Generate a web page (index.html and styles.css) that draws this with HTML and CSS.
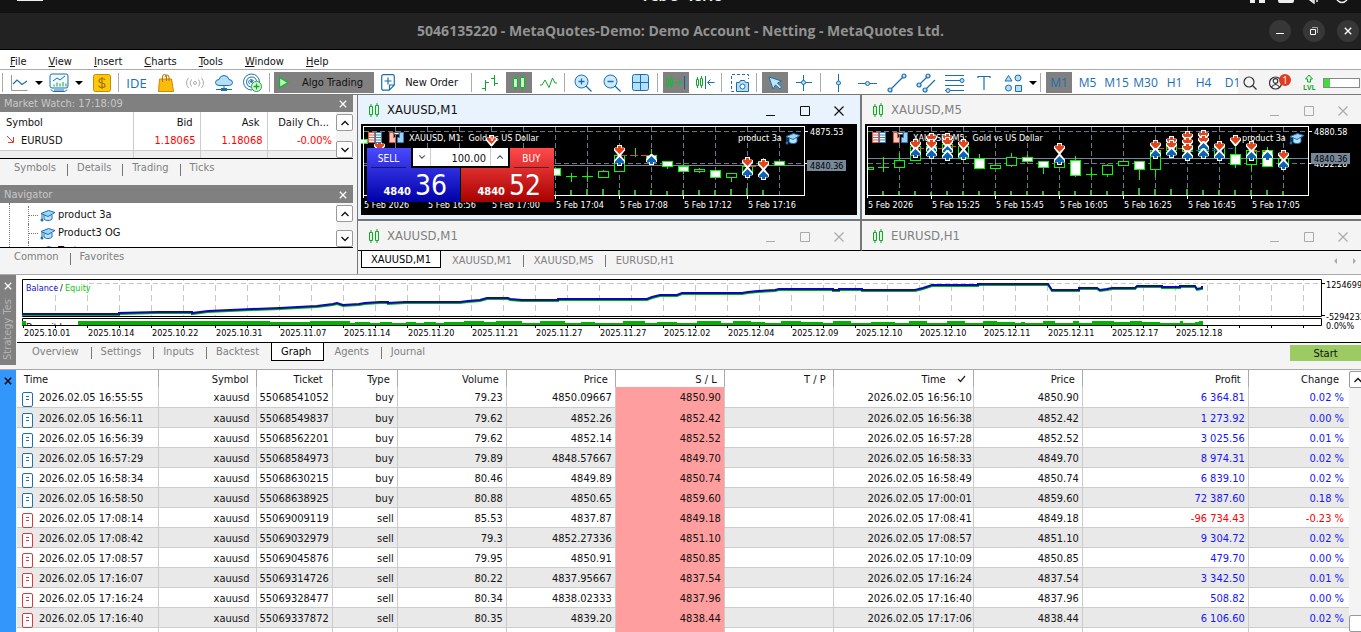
FILE: index.html
```html
<!DOCTYPE html>
<html lang="en">
<head>
    <meta charset="UTF-8">
    <meta name="viewport" content="width=device-width, initial-scale=1.0">
    <title>5046135220 - MetaQuotes-Demo: Demo Account - Netting - MetaQuotes Ltd.</title>
    <link rel="stylesheet" href="styles.css">
</head>
<body>
    <!-- shared icons -->
    <svg class="sprite" aria-hidden="true">
        <symbol id="i-close" viewBox="0 0 10 10"><path d="M1 1l8 8M9 1l-8 8" fill="none" stroke="currentColor" stroke-width="1.6"/></symbol>
        <symbol id="i-thin-close" viewBox="0 0 10 10"><path d="M.5.5l9 9M9.500.5l-9 9" fill="none" stroke="currentColor" stroke-width="1.2"/></symbol>
        <symbol id="i-max" viewBox="0 0 10 10"><path d="M.5.5h9v9h-9z" fill="none" stroke="currentColor"/></symbol>
        <symbol id="i-min" viewBox="0 0 10 10"><path d="M0 9.500h9" fill="none" stroke="currentColor"/></symbol>
        <symbol id="i-up" viewBox="0 0 10 10"><path d="M1.500 7L5 3.500 8.500 7" fill="none" stroke="currentColor" stroke-width="1.3"/></symbol>
        <symbol id="i-down" viewBox="0 0 10 10"><path d="M1.500 3L5 6.500 8.500 3" fill="none" stroke="currentColor" stroke-width="1.3"/></symbol>
        <symbol id="i-candles" viewBox="0 0 12 16"><path d="M1.500 4.500h3v8h-3zM7.500 3.500h3v9h-3z" fill="#d9fbd9" stroke="#15a52c"/><path d="M3 2v2M3 13v2M9 1v2M9 13v2" stroke="#15a52c"/></symbol>
        <symbol id="i-cap" viewBox="0 0 16 13"><path d="M4 6v4c2 2 6 2 8 0V6" fill="#bfe3fb" stroke="#1a6fb0"/><path d="M1 4.500L8.500 1.500 15 3.500 8 7.500z" fill="#9fd4f7" stroke="#1a6fb0"/><path d="M2 5v6" stroke="#1a6fb0"/><circle cx="2" cy="11" r="1.500" fill="#1a6fb0"/></symbol>
        <symbol id="i-doc" viewBox="0 0 11 15"><rect x=".5" y=".5" width="10" height="14" rx="1.500" fill="#fff" stroke="currentColor"/><path d="M4 4.500h3M4 7.500h3" stroke="currentColor"/></symbol>
        <g id="m-sell"><path d="M3 0h5v2.500h2l1 1v2L6.500 11h-2L0 5.500v-2l1-1h2z" fill="#fff"/><path d="M4 1h3v2h3v1.500L5.500 9 1 4.500V3h3z" fill="#e2441c"/></g>
        <g id="m-buy"><path d="M3 11h5V8.500h2l1-1v-2L6.500 0h-2L0 5.500v2l1 1h2z" fill="#fff"/><path d="M4 10h3V8h3V6.500L5.500 2 1 6.500V8h3z" fill="#0c62b4"/></g>
        <symbol id="c-marks" viewBox="0 0 38 13"><path d="M1.500 1.500h6v10h-6z" fill="#fff" stroke="#e05545"/><path d="M8.500 1.500h6v10h-6z" fill="#fff" stroke="#2c7fc4"/><path d="M2 4h5M2 6.500h5M2 9h5" stroke="#e05545"/><path d="M8 4h6M8 6.500h6M8 9h6" stroke="#2c7fc4"/><path d="M22.500 1.500h4v5h2v5h-6z" fill="#f8c5bd" stroke="#e05545"/><path d="M36.500 1.500h-4v5h-2v5h6z" fill="#9fd0f5" stroke="#2c7fc4"/><path d="M27 1.500h5v2h-5z" fill="#fff" stroke="#555"/></symbol>
        <symbol id="c-grid" viewBox="0 0 444 80">
            <path d="M3 7.500h440M3 39.500h440M34.500 3v68M66.500 3v68M98.500 3v68M130.500 3v68M162.500 3v68M194.500 3v68M226.500 3v68M258.500 3v68M290.500 3v68M322.500 3v68M354.500 3v68M386.500 3v68M418.500 3v68" fill="none" stroke="#67798b" stroke-dasharray="5 3"/>
        </symbol>
    </svg>

    <div class="desktop-bar">
        <span class="pill"></span>
        <time class="clock">Feb 5  18:18</time>
        <svg class="tray" width="104" height="4" viewBox="0 0 104 4" fill="#eee"><path d="M4 0h5v3H4zM13 0h6v3h-6zM32 0h16v1q0 2-2 2H34q-2 0-2-2z"/><path d="M64 0l4 3V0zM71 0v2M91 0q5 5 10 0" fill="none" stroke="#eee" stroke-width="1.500"/></svg>
    </div>
    <header class="title-bar">
        <h1>5046135220 - MetaQuotes-Demo: Demo Account - Netting - MetaQuotes Ltd.</h1>
        <div class="title-buttons">
            <button aria-label="Minimize"><svg width="10" height="10"><path d="M1 7.500h8" stroke="#fff"/></svg></button>
            <button aria-label="Restore"><svg width="10" height="10" fill="none" stroke="#fff"><path d="M1.500 3.500h5v5h-5z"/><path d="M3 1.500h5.500V7" stroke="#aaa"/></svg></button>
            <button aria-label="Close"><svg width="8" height="8"><use href="#i-close"/></svg></button>
        </div>
    </header>

    <nav class="menu-bar">
        <a href="#"><u>F</u>ile</a>
        <a href="#"><u>V</u>iew</a>
        <a href="#"><u>I</u>nsert</a>
        <a href="#"><u>C</u>harts</a>
        <a href="#"><u>T</u>ools</a>
        <a href="#"><u>W</u>indow</a>
        <a href="#"><u>H</u>elp</a>
    </nav>

    <div class="toolbar">
        <div class="tools">
            <span class="sep first"></span>
            <button class="tool" aria-label="Chart"><svg width="20" height="20" fill="none"><path d="M2.500 2v15.500h16" stroke="#999"/><path d="M4 11l4-4 5 4.500L18 8" stroke="#1a6fb0" stroke-width="1.200"/></svg></button>
            <button class="caret" aria-label="More charts"></button>
            <button class="tool" aria-label="Profiles"><svg width="20" height="20" fill="none" stroke="#1a6fb0"><rect x="1" y="1" width="18" height="14" rx="2" fill="#f2faff"/><path d="M4 8l4-3 3 2 5-4M2 16.500q1 2 3 2h10q2 0 3-2M5 17h10"/><path d="M5 13.500v-2M8 13.500v-4M11 13.500v-3M14 13.500v-4.500M17 13.500v-3" stroke="#15a52c"/></svg></button>
            <button class="caret" aria-label="More profiles"></button>
            <button class="tool dollar" aria-label="Symbols"><svg width="18" height="18"><rect x=".5" y=".5" width="17" height="17" rx="2" fill="#fdc70c" stroke="#c98a00"/><path d="M12 6q-.5-1.500-3-1.500T6 6.500Q6 8.500 9 9t3 2.500-3 2-3.200-2M9 3v12" fill="none" stroke="#a87400" stroke-width="1.200"/></svg></button>
            <span class="sep"></span>
            <button class="tool ide">IDE</button>
            <button class="tool" aria-label="Market"><svg width="18" height="20"><path d="M2.500 6h12l2 12.500h-15z" fill="#fdbb0a" stroke="#c98a00"/><path d="M5.500 9V4q0-2.500 2-2.500T9.500 4v4M8 4q0-2 2-2t2 2v4" fill="none" stroke="#a87400"/></svg></button>
            <button class="tool" aria-label="Signals"><svg width="20" height="14" fill="none" stroke="#aaa"><circle cx="10" cy="7" r="1.500"/><path d="M6.500 3.500q-3 3.500 0 7M13.500 3.500q3 3.500 0 7M3.500 2q-4 5 0 10M16.500 2q4 5 0 10"/></svg></button>
            <button class="tool" aria-label="VPS"><svg width="20" height="18" stroke="#1a6fb0"><path d="M5 11.500Q1.500 11.500 1.500 8.500T5 5.500Q6 1.500 10 1.500t5 4q3.500.3 3.500 3t-3 3z" fill="#b5def8"/><path d="M10 12v3M2 15.500h16" fill="none"/><path d="M7 15.500h6" stroke-width="3"/></svg></button>
            <button class="tool" aria-label="Radar"><svg width="20" height="20" fill="none" stroke="#1a6fb0"><path d="M9 17A8 8 0 1 1 16.500 9M8 14A5 5 0 1 1 13.500 8M7 11.200A2.500 2.500 0 1 1 10.500 8"/><circle cx="8.500" cy="8.500" r="1" fill="#1a6fb0"/><circle cx="13.500" cy="13.500" r="5" fill="#dcfbdc" stroke="#15a52c"/><path d="M10.500 13.500h6M13.500 10.500v6" stroke="#15a52c" stroke-width="1.300"/></svg></button>
            <span class="sep"></span>
            <button class="algo"><svg width="12" height="13"><path d="M1.500 1.500L10 6.500l-8.500 5z" fill="#b9f5b9" stroke="#12b52e" stroke-width="1.300"/></svg>Algo Trading</button>
            <button class="new-order"><svg width="14" height="17" fill="none" stroke="#1a6fb0" stroke-width="1.200"><path d="M.7 2.500q0-1.800 1.800-1.800h9q1.800 0 1.800 1.800V11l-5 5.200H2.500Q.7 16.200.7 14.500zM13 11H8.500v5"/><path d="M3.500 7h7M7 3.500v7"/></svg>New Order</button>
            <span class="sep"></span>
            <button class="tool" aria-label="Bar chart"><svg width="18" height="18" fill="none" stroke="#15a52c"><path d="M4.500 6v11M1 14.500h3M5 8.500h3M13.500 1v11M10 4.500h3M14 9.500h3"/></svg></button>
            <button class="tool on" aria-label="Candlesticks"><svg width="14" height="18"><path d="M1.500 4.500h4v9h-4zM8.500 3.500h4v10h-4z" fill="#c6fac6" stroke="#12b52e"/><path d="M3.500 2v2M3.500 14v2M10.500 1v2M10.500 14v3" stroke="#12b52e"/></svg></button>
            <button class="tool" aria-label="Line chart"><svg width="18" height="14" fill="none" stroke="#15a52c"><path d="M1 9h2l3-5 4 7.500L13.500 2l2.500 5h2"/></svg></button>
            <span class="sep"></span>
            <button class="tool" aria-label="Zoom in"><svg width="18" height="18" stroke="#1a6fb0"><circle cx="7.500" cy="7.500" r="6.500" fill="#cdeafd"/><path d="M12 12l5.500 5.500M4.500 7.500h6M7.500 4.500v6" stroke-width="1.300"/></svg></button>
            <button class="tool" aria-label="Zoom out"><svg width="18" height="18" stroke="#1a6fb0"><circle cx="7.500" cy="7.500" r="6.500" fill="#cdeafd"/><path d="M12 12l5.500 5.500M4.500 7.500h6" stroke-width="1.300"/></svg></button>
            <button class="tool" aria-label="Tile windows"><svg width="18" height="18"><rect x=".5" y=".5" width="16" height="16" rx="2" fill="#b5e0fb" stroke="#1a6fb0"/><path d="M8.500 1v16M1 8.500h16" stroke="#1a6fb0"/></svg></button>
            <span class="sep"></span>
            <button class="tool on" aria-label="Auto scroll"><svg width="22" height="18" fill="none" stroke="#10c030"><path d="M1.500 5.500h2v6h-2zM5.500 4.500h2v7h-2zM2.500 3v2M2.500 12v2M6.500 2v2M6.500 12v2M10 8.500h6M13.500 5.500l3 3-3 3"/><path d="M19.500 2v13" stroke="#0c5ea0"/></svg></button>
            <button class="tool" aria-label="Chart shift"><svg width="20" height="18" fill="none" stroke="#15a52c"><path d="M1.500 5.500h2v6h-2zM5.500 4.500h2v7h-2zM2.500 3v2M2.500 12v2M6.500 2v2M6.500 12v2"/><path d="M10.500 2v13M13 8.500h6.500M15.500 5.500l-3 3 3 3" stroke="#1a6fb0"/></svg></button>
            <span class="sep"></span>
            <button class="tool" aria-label="Screenshot"><svg width="20" height="20" fill="none" stroke="#1a6fb0"><path d="M4 18.500H1.500v-17h17V6" stroke-dasharray="3 2"/><path d="M6.500 9.500h3l1-2h4l1 2h3v9h-12z" fill="#b5def8"/><circle cx="12.500" cy="13.500" r="2.500" fill="#fff"/></svg></button>
            <span class="sep"></span>
            <button class="tool on" aria-label="Cursor"><svg width="16" height="16"><path d="M2 2l4 12 2.500-4 4.500 4 1.500-2-4-4 4-2z" fill="#bfe5fd" stroke="#1a6fb0"/></svg></button>
            <button class="tool" aria-label="Crosshair"><svg width="18" height="18" fill="none" stroke="#1a6fb0"><path d="M8.500 1v16M1 8.500h16"/><circle cx="8.500" cy="8.500" r="2" fill="#b5def8"/></svg></button>
            <span class="sep"></span>
            <button class="tool" aria-label="Vertical line"><svg width="18" height="18" fill="none" stroke="#1a6fb0"><path d="M8.500 0v18"/><circle cx="8.500" cy="9" r="2" fill="#b5def8"/></svg></button>
            <button class="tool" aria-label="Horizontal line"><svg width="19" height="18" fill="none" stroke="#1a6fb0"><path d="M0 9.500h19"/><circle cx="9.500" cy="9.500" r="2" fill="#b5def8"/></svg></button>
            <button class="tool" aria-label="Trend line"><svg width="20" height="20" fill="none" stroke="#1a6fb0" stroke-width="1.200"><path d="M3 17L17 3"/><circle cx="3" cy="17" r="2" fill="#b5def8"/><circle cx="17" cy="3" r="2" fill="#b5def8"/></svg></button>
            <button class="tool" aria-label="Channel"><svg width="20" height="20" fill="none" stroke="#1a6fb0" stroke-width="1.200"><path d="M3 12l9-9M9 17L19 7"/><circle cx="3" cy="12" r="2" fill="#b5def8"/><circle cx="12" cy="3" r="2" fill="#b5def8"/><circle cx="9" cy="17" r="2" fill="#b5def8"/></svg></button>
            <button class="tool" aria-label="Fibonacci"><svg width="20" height="20" fill="none" stroke="#1a6fb0"><path d="M0 2.500h19M0 7.500h19M0 12.500h19M0 17.500h19"/><circle cx="17" cy="7.500" r="2" fill="#b5def8"/><circle cx="3" cy="17.500" r="2" fill="#b5def8"/></svg></button>
            <button class="tool" aria-label="Text"><svg width="14" height="16"><path d="M1 3V1.500h12V3M7 1.500V15" fill="none" stroke="#1a6fb0" stroke-width="1.200"/></svg></button>
            <button class="tool" aria-label="Objects"><svg width="18" height="18" fill="#b5def8" stroke="#1a6fb0"><path d="M4.500 1.500L8 7H1zM11.500 11.500h6v6h-6z"/><circle cx="14" cy="4" r="3"/><circle cx="4.500" cy="14" r="3"/></svg></button>
            <button class="caret" aria-label="More objects"></button>
            <span class="sep"></span>
            <button class="tool tf on">M1</button>
            <button class="tool tf">M5</button>
            <button class="tool tf">M15</button>
            <button class="tool tf">M30</button>
            <button class="tool tf">H1</button>
            <button class="tool tf">H4</button>
            <button class="tool tf">D1</button>
        </div>
        <div class="status-tools">
            <button aria-label="Search"><svg width="14" height="14" fill="none" stroke="#333" stroke-width="1.200"><circle cx="6" cy="6" r="5"/><path d="M9.500 9.500l4 4"/></svg></button>
            <button class="account" aria-label="Account"><svg width="14" height="14" fill="none" stroke="#333" stroke-width="1.200"><circle cx="6.500" cy="7" r="6"/><circle cx="6.500" cy="5" r="2.300"/><path d="M2.500 11q4-5 8 0"/></svg><span class="badge">1</span></button>
            <button class="lvl" aria-label="Level"><svg width="10" height="10"><path d="M5 1l3.500 4H6.500v3h-3V5H1.500z" fill="#dcfbdc" stroke="#15a52c"/></svg>LVL</button>
            <span class="gauge"><span></span></span>
        </div>
    </div>

    <main>
        <aside class="dock">
            <section class="watch">
                <h2 class="dock-title">Market Watch: 17:18:09 <button aria-label="Close Market Watch"><svg width="8" height="8"><use href="#i-close"/></svg></button></h2>
                <div class="dock-body">
                    <table>
                        <colgroup><col class="w-sym"><col class="w-num"><col class="w-num"><col></colgroup>
                        <thead><tr><th>Symbol</th><th>Bid</th><th>Ask</th><th>Daily Ch...</th></tr></thead>
                        <tbody>
                            <tr><td><svg width="9" height="9" fill="none" stroke="#d8402c"><path d="M1 1l6 6M7.500 2v5.500H2"/></svg>EURUSD</td><td>1.18065</td><td>1.18068</td><td>-0.00%</td></tr>
                            <tr><td></td><td></td><td></td><td></td></tr>
                        </tbody>
                    </table>
                    <div class="scroll">
                        <button aria-label="Scroll up"><svg width="10" height="10"><use href="#i-up"/></svg></button>
                        <button aria-label="Scroll down"><svg width="10" height="10"><use href="#i-down"/></svg></button>
                    </div>
                </div>
                <nav class="tabs"><a href="#">Symbols</a><a href="#">Details</a><a href="#">Trading</a><a href="#">Ticks</a></nav>
            </section>
            <section class="navigator">
                <h2 class="dock-title">Navigator <button aria-label="Close Navigator"><svg width="8" height="8"><use href="#i-close"/></svg></button></h2>
                <div class="dock-body">
                    <ul class="tree">
                        <li><svg width="16" height="13"><use href="#i-cap"/></svg>product 3a</li>
                        <li><svg width="16" height="13"><use href="#i-cap"/></svg>Product3 OG</li>
                        <li><svg width="16" height="13"><use href="#i-cap"/></svg>Test</li>
                    </ul>
                    <div class="scroll">
                        <button aria-label="Scroll up"><svg width="10" height="10"><use href="#i-up"/></svg></button>
                        <button aria-label="Scroll down"><svg width="10" height="10"><use href="#i-down"/></svg></button>
                    </div>
                </div>
                <nav class="tabs"><a href="#">Common</a><a href="#">Favorites</a></nav>
            </section>
        </aside>

        <section class="workspace">
            <div class="windows">
                <article class="window active">
                    <header>
                        <svg width="12" height="16"><use href="#i-candles"/></svg>
                        <h3>XAUUSD,M1</h3>
                        <button aria-label="Minimize"><svg width="10" height="10"><use href="#i-min"/></svg></button>
                        <button aria-label="Maximize"><svg width="10" height="10"><use href="#i-max"/></svg></button>
                        <button aria-label="Close"><svg width="10" height="10"><use href="#i-thin-close"/></svg></button>
                    </header>
                    <div class="chart">
                        <svg width="495" height="91" viewBox="0 0 495 91">
                            <use href="#c-grid" width="444" height="80"/>
                            <path d="M3 41.500h440" stroke="#778899"/>
                            <path d="M210.500 49v9M205 52.500h11M226.500 48v10M221 52.500h11M242.500 46v8M274.500 24v9M290.500 25v6M306.500 42v3M322.500 40v10M338.500 44v5M370.500 54v4M258.500 23v25M402.500 34v10" stroke="#0f0"/>
                            <path d="M237.500 47.500h10v6h-10zM253.500 31.500h10v16h-10zM333.500 45.500h10v2h-10zM365.500 49.500h10v4h-10zM381.500 42.500h10v7h-10z" stroke="#0f0"/>
                            <path class="down" d="M189.500 44.500h10v7h-10zM285.500 31.500h10v6h-10zM301.500 37.500h10v5h-10zM317.500 42.500h10v5h-10zM349.500 46.500h10v7h-10zM397.500 37.500h10v4h-10zM413.500 37.500h10v4h-10zM-1 15.500h7v4h-7z" stroke="#0f0"/>
                            <path d="M258 31.500h32M387 42.500h16" stroke="#e2441c" stroke-dasharray="8 3"/>
                            <path class="volume" d="M210 71v-5M226 71v-6M242 71v-6M258 71v-5M274 71v-5M290 71v-5M306 71v-4M322 71v-5M338 71v-5M354 71v-5M370 71v-6M386 71v-7M402 71v-5"/>
                            <g>
                                <use href="#m-sell" x="13" y="17"/><use href="#m-sell" x="125" y="11"/>
                                <use href="#m-sell" x="253" y="21"/><use href="#m-buy" x="253" y="31"/>
                                <use href="#m-buy" x="285" y="30"/>
                                <use href="#m-sell" x="381" y="33"/><use href="#m-buy" x="381" y="43"/>
                                <use href="#m-sell" x="397" y="35"/><use href="#m-buy" x="397" y="45"/>
                            </g>
                            <path class="frame" d="M2.500 74V2.500h441v69h-441M66.500 72v3M130.500 72v3M194.500 72v3M258.500 72v3M322.500 72v3M386.500 72v3M444 7.500h3M444 39.500h3"/>
                            <use href="#c-marks" x="6" y="7" width="38" height="13"/>
                            <g class="labels">
                                <text x="48" y="17" xml:space="preserve">XAUUSD, M1:  Gold vs US Dollar</text>
                                <text x="377" y="17">product 3a</text>
                                <text x="3" y="84">5 Feb 2026</text><text x="67" y="84">5 Feb 16:56</text><text x="131" y="84">5 Feb 17:00</text><text x="195" y="84">5 Feb 17:04</text><text x="259" y="84">5 Feb 17:08</text><text x="323" y="84">5 Feb 17:12</text><text x="387" y="84">5 Feb 17:16</text>
                                <text x="449" y="11">4875.53</text>
                            </g>
                            <use href="#i-cap" x="424" y="8" width="16" height="13"/>
                            <path d="M446 36h39v11h-39z" fill="#778899"/>
                            <text x="449" y="45" class="price">4840.36</text>
                        </svg>
                        <form class="one-click">
                            <button type="button" class="quote sell"><span class="side">SELL</span><span class="rate">4840 <b>36</b></span></button>
                            <button type="button" class="quote buy"><span class="side">BUY</span><span class="rate">4840 <b>52</b></span></button>
                            <div class="lots">
                                <button type="button" aria-label="Less"><svg width="8" height="8"><use href="#i-down"/></svg></button>
                                <input type="text" value="100.00" aria-label="Volume">
                                <button type="button" aria-label="More"><svg width="8" height="8"><use href="#i-up"/></svg></button>
                            </div>
                        </form>
                    </div>
                </article>
                <article class="window">
                    <header>
                        <svg width="12" height="16"><use href="#i-candles"/></svg>
                        <h3>XAUUSD,M5</h3>
                        <button aria-label="Minimize"><svg width="10" height="10"><use href="#i-min"/></svg></button>
                        <button aria-label="Maximize"><svg width="10" height="10"><use href="#i-max"/></svg></button>
                        <button aria-label="Close"><svg width="10" height="10"><use href="#i-thin-close"/></svg></button>
                    </header>
                    <div class="chart">
                        <svg width="495" height="91" viewBox="0 0 495 91">
                            <use href="#c-grid" width="444" height="80"/>
                            <path d="M3 34.500h440" stroke="#778899"/>
                            <g class="labels"><text x="48" y="17" xml:space="preserve">XAUUSD, M5:  Gold vs US Dollar</text></g>
                            <path d="M18.500 33v15M13 43.500h11M34.500 29v7M114.500 30v5M130.500 39v2M146.500 29v4M146.500 41v2M162.500 31v8M178.500 37v13M210.500 32v21M226.500 44v9M221 50.500h11M242.500 40v1M242.500 51v2M274.500 37v19M290.500 46v7M370.500 18v26M386.500 40v7M402.500 23v4" stroke="#0f0"/>
                            <path d="M3 43.500h5v2h-5zM29.500 36.500h10v7h-10zM45.500 22.500h10v14h-10zM61.500 22.500h10v5h-10zM77.500 20.500h10v8h-10zM93.500 22.500h10v12h-10zM125.500 41.500h10v3h-10zM141.500 33.500h10v8h-10zM189.500 36.500h10v7h-10zM237.500 41.500h10v9h-10zM253.500 37.500h10v4h-10zM285.500 26.500h10v19h-10zM301.500 21.500h10v5h-10zM317.500 21.500h10v6h-10zM333.500 24.500h10v3h-10zM349.500 23.500h10v7h-10zM381.500 26.500h10v14h-10zM413.500 34.500h10v8h-10z" stroke="#0f0"/>
                            <path class="down" d="M109.500 34.500h10v10h-10zM157.500 33.500h10v4h-10zM173.500 37.500h10v6h-10zM205.500 36.500h10v15h-10zM269.500 37.500h10v8h-10zM365.500 30.500h10v10h-10zM397.500 26.500h10v16h-10z" stroke="#0f0"/>
                            <path d="M51 24.500h32M83 22.500h16M291 24.500h32M387 27.500h16" stroke="#e2441c" stroke-dasharray="8 3"/>
                            <path d="M323 26.500h32M339 24.500h32" stroke="#0c62b4" stroke-dasharray="5 3"/>
                            <path class="volume" d="M18 71v-4M34 71v-4M50 71v-4M66 71v-3M82 71v-4M98 71v-4M114 71v-4M130 71v-4M146 71v-4M162 71v-4M178 71v-4M194 71v-4M210 71v-4M226 71v-5M242 71v-4M258 71v-4M274 71v-7M290 71v-6M306 71v-6M322 71v-6M338 71v-5M354 71v-5M370 71v-5M386 71v-5M402 71v-5M418 71v-4"/>
                            <g>
                                <use href="#m-sell" x="45" y="15"/><use href="#m-buy" x="45" y="23"/>
                                <use href="#m-sell" x="61" y="9"/><use href="#m-buy" x="61" y="19"/><use href="#m-sell" x="61" y="15"/><use href="#m-buy" x="61" y="24"/>
                                <use href="#m-sell" x="77" y="9"/><use href="#m-sell" x="77" y="13"/><use href="#m-buy" x="77" y="20"/><use href="#m-buy" x="77" y="26"/>
                                <use href="#m-sell" x="93" y="15"/><use href="#m-buy" x="93" y="25"/>
                                <use href="#m-sell" x="189" y="19"/><use href="#m-buy" x="189" y="30"/>
                                <use href="#m-sell" x="285" y="16"/><use href="#m-buy" x="285" y="24"/>
                                <use href="#m-sell" x="301" y="12"/><use href="#m-sell" x="301" y="16"/><use href="#m-buy" x="301" y="23"/>
                                <use href="#m-sell" x="317" y="7"/><use href="#m-sell" x="317" y="13"/><use href="#m-sell" x="317" y="19"/><use href="#m-buy" x="317" y="26"/>
                                <use href="#m-sell" x="333" y="6"/><use href="#m-sell" x="333" y="11"/><use href="#m-buy" x="333" y="17"/><use href="#m-buy" x="333" y="24"/>
                                <use href="#m-sell" x="349" y="17"/><use href="#m-buy" x="349" y="26"/>
                                <use href="#m-sell" x="365" y="11"/>
                                <use href="#m-sell" x="381" y="17"/><use href="#m-buy" x="381" y="26"/>
                                <use href="#m-buy" x="397" y="26"/>
                                <use href="#m-sell" x="413" y="26"/><use href="#m-buy" x="413" y="35"/>
                            </g>
                            <path class="frame" d="M2.500 74V2.500h441v69h-441M66.500 72v3M130.500 72v3M194.500 72v3M258.500 72v3M322.500 72v3M386.500 72v3M444 7.500h3M444 39.500h3"/>
                            <use href="#c-marks" x="6" y="7" width="38" height="13"/>
                            <g class="labels">
                                <text x="377" y="17">product 3a</text>
                                <text x="3" y="84">5 Feb 2026</text><text x="67" y="84">5 Feb 15:25</text><text x="131" y="84">5 Feb 15:45</text><text x="195" y="84">5 Feb 16:05</text><text x="259" y="84">5 Feb 16:25</text><text x="323" y="84">5 Feb 16:45</text><text x="387" y="84">5 Feb 17:05</text>
                                <text x="449" y="11">4880.58</text><text x="449" y="43">4852.28</text>
                            </g>
                            <use href="#i-cap" x="424" y="8" width="16" height="13"/>
                            <path d="M446 29h39v11h-39z" fill="#778899"/>
                            <text x="449" y="38" class="price">4840.36</text>
                        </svg>
                    </div>
                </article>
                <article class="window cut">
                    <header>
                        <svg width="12" height="16"><use href="#i-candles"/></svg>
                        <h3>XAUUSD,M1</h3>
                        <button aria-label="Minimize"><svg width="10" height="10"><use href="#i-min"/></svg></button>
                        <button aria-label="Maximize"><svg width="10" height="10"><use href="#i-max"/></svg></button>
                        <button aria-label="Close"><svg width="10" height="10"><use href="#i-thin-close"/></svg></button>
                    </header>
                </article>
                <article class="window cut">
                    <header>
                        <svg width="12" height="16"><use href="#i-candles"/></svg>
                        <h3>EURUSD,H1</h3>
                        <button aria-label="Minimize"><svg width="10" height="10"><use href="#i-min"/></svg></button>
                        <button aria-label="Maximize"><svg width="10" height="10"><use href="#i-max"/></svg></button>
                        <button aria-label="Close"><svg width="10" height="10"><use href="#i-thin-close"/></svg></button>
                    </header>
                </article>
            </div>
            <nav class="tabs chart-tabs">
                <a href="#" class="current">XAUUSD,M1</a><a href="#">XAUUSD,M1</a><a href="#">XAUUSD,M5</a><a href="#">EURUSD,H1</a>
                <svg class="arrows" width="24" height="8" fill="#aaa"><path d="M4 1v6L1 4zM20 1v6l3-3z"/></svg>
            </nav>
        </section>
    </main>

    <section class="tester">
        <div class="side-strip">
            <button aria-label="Close Strategy Tester"><svg width="8" height="8"><use href="#i-close"/></svg></button>
            <h2>Strategy Tester</h2>
        </div>
        <div class="tester-body">
            <div class="graph">
                <svg width="1344" height="66" viewBox="0 0 1344 66">
                    <defs>
                        <pattern id="months" x="6" width="32" height="46" patternUnits="userSpaceOnUse"><path d="M.5 0v46" stroke="#c8c8c8" stroke-dasharray="6 4"/></pattern>
                        <pattern id="ticks" x="6" y="50" width="32" height="3" patternUnits="userSpaceOnUse"><path d="M.5 0v3" stroke="#000"/></pattern>
                        <clipPath id="load"><path d="M6 44h52v6H6z"/></clipPath>
                        <path id="balance" d="M5 39H102V38L141 37H175V38L191 36 213 35 235 34 263 33 281 32 300 31 308 30 316 29 320 28 326 30 342 29 348 28 363 27H371V28L388 27H443L451 26 463 25 470 23H491L493 24 505 25H541V24H630L635 22 643 20H660L665 18H725L731 17 741 16 758 15 762 14H816V15H822V14H845V15H898L906 13 915 10H961V9H1031L1033 12 1035 15H1062V13H1080L1083 15 1090 14 1095 13H1118L1120 11H1145V12H1163V11H1178L1180 14 1185 13V11"/>
                    </defs>
                    <path d="M38 5h1266v36H38z" fill="url(#months)"/>
                    <path d="M72 8.500h1232" stroke="#c8c8c8" stroke-dasharray="5 3"/>
                    <path d="M5.500 4.500h1299v37H5.500zM5.500 43.500h1299v7H5.500zM1305 8.500h3M1305 40.500h3" fill="none" stroke="#000"/>
                    <g fill="none" stroke-width="2">
                        <use href="#balance" y="1" stroke="#00b400"/>
                        <use href="#balance" stroke="#0a0ab4"/>
                    </g>
                    <path d="M5 46h4v4H5zM61 46h192v1h40v-1h40v2h5v-1h15v1h10v-1h12v1h14v-1h10v1h8v-1h12v1h8v-1h20v-1h20v1h12v-1h26v2h18v-2h25v2h16v-1h14v1h28v-2h22v2h12v-1h20v1h20v-2h24v2h12v-2h18v1h14v1h16v-2h20v1h22v1h10v-2h18v2h20v-1h24v1h14v-2h18v2h20v-2h18v2h18v-2h14v1h18v1h6v-1h4v1h18v-2h12v2h18v-2h6v2h13v-2h22v1h16v-1h12v1h18v1h20v-2h3v2h12v-1h4v-1h4V50H61z" fill="#00b400"/>
                    <path d="M6 50h1298v3H6z" fill="url(#ticks)"/>
                    <text x="9" y="55" clip-path="url(#load)">Deposit Load</text>
                    <g><text x="9" y="16" fill="#1414c8">Balance</text><text x="43" y="16" fill="#000">/</text><text x="48" y="16" fill="#14c814">Equity</text></g>
                    <g>
                        <text x="7" y="61">2025.10.01</text><text x="71" y="61">2025.10.14</text><text x="135" y="61">2025.10.22</text><text x="199" y="61">2025.10.31</text><text x="263" y="61">2025.11.07</text><text x="327" y="61">2025.11.14</text><text x="391" y="61">2025.11.20</text><text x="455" y="61">2025.11.21</text><text x="519" y="61">2025.11.27</text><text x="583" y="61">2025.11.27</text><text x="647" y="61">2025.12.02</text><text x="711" y="61">2025.12.04</text><text x="775" y="61">2025.12.09</text><text x="839" y="61">2025.12.10</text><text x="903" y="61">2025.12.10</text><text x="967" y="61">2025.12.11</text><text x="1031" y="61">2025.12.11</text><text x="1095" y="61">2025.12.17</text><text x="1159" y="61">2025.12.18</text>
                        <text x="1309" y="13">12546995</text><text x="1309" y="45">-5294233</text><text x="1309" y="54">0.0%%</text>
                    </g>
                </svg>
            </div>
            <nav class="tabs tester-tabs">
                <a href="#">Overview</a><a href="#">Settings</a><a href="#">Inputs</a><a href="#">Backtest</a><a href="#" class="current">Graph</a><a href="#">Agents</a><a href="#">Journal</a>
                <button class="start">Start</button>
            </nav>
        </div>
    </section>

    <section class="toolbox">
        <div class="side-strip">
            <button aria-label="Close Toolbox"><svg width="8" height="8"><use href="#i-close"/></svg></button>
        </div>
        <table class="history">
            <colgroup><col class="w141"><col class="w98"><col class="w76"><col class="w65"><col class="w109"><col class="w109"><col class="w109"><col class="w109"><col class="w140"><col class="w109"><col class="w166"><col></colgroup>
            <thead>
                <tr><th>Time</th><th>Symbol</th><th>Ticket</th><th>Type</th><th>Volume</th><th>Price</th><th>S / L</th><th>T / P</th><th>Time <svg width="9" height="8"><path d="M1 4l2.500 2.500L8 1" fill="none" stroke="#222" stroke-width="1.200"/></svg></th><th>Price</th><th>Profit</th><th>Change</th></tr>
            </thead>
            <tbody>
                <tr><td><svg width="11" height="15"><use href="#i-doc"/></svg>2026.02.05 16:55:55</td><td>xauusd</td><td>55068541052</td><td>buy</td><td>79.23</td><td>4850.09667</td><td>4850.90</td><td></td><td>2026.02.05 16:56:10</td><td>4850.90</td><td>6 364.81</td><td>0.02 %</td></tr>
                <tr><td><svg width="11" height="15"><use href="#i-doc"/></svg>2026.02.05 16:56:11</td><td>xauusd</td><td>55068549837</td><td>buy</td><td>79.62</td><td>4852.26</td><td>4852.42</td><td></td><td>2026.02.05 16:56:38</td><td>4852.42</td><td>1 273.92</td><td>0.00 %</td></tr>
                <tr><td><svg width="11" height="15"><use href="#i-doc"/></svg>2026.02.05 16:56:39</td><td>xauusd</td><td>55068562201</td><td>buy</td><td>79.62</td><td>4852.14</td><td>4852.52</td><td></td><td>2026.02.05 16:57:28</td><td>4852.52</td><td>3 025.56</td><td>0.01 %</td></tr>
                <tr><td><svg width="11" height="15"><use href="#i-doc"/></svg>2026.02.05 16:57:29</td><td>xauusd</td><td>55068584973</td><td>buy</td><td>79.89</td><td>4848.57667</td><td>4849.70</td><td></td><td>2026.02.05 16:58:33</td><td>4849.70</td><td>8 974.31</td><td>0.02 %</td></tr>
                <tr><td><svg width="11" height="15"><use href="#i-doc"/></svg>2026.02.05 16:58:34</td><td>xauusd</td><td>55068630215</td><td>buy</td><td>80.46</td><td>4849.89</td><td>4850.74</td><td></td><td>2026.02.05 16:58:49</td><td>4850.74</td><td>6 839.10</td><td>0.02 %</td></tr>
                <tr><td><svg width="11" height="15"><use href="#i-doc"/></svg>2026.02.05 16:58:50</td><td>xauusd</td><td>55068638925</td><td>buy</td><td>80.88</td><td>4850.65</td><td>4859.60</td><td></td><td>2026.02.05 17:00:01</td><td>4859.60</td><td>72 387.60</td><td>0.18 %</td></tr>
                <tr class="short loss"><td><svg width="11" height="15"><use href="#i-doc"/></svg>2026.02.05 17:08:14</td><td>xauusd</td><td>55069009119</td><td>sell</td><td>85.53</td><td>4837.87</td><td>4849.18</td><td></td><td>2026.02.05 17:08:41</td><td>4849.18</td><td>-96 734.43</td><td>-0.23 %</td></tr>
                <tr class="short"><td><svg width="11" height="15"><use href="#i-doc"/></svg>2026.02.05 17:08:42</td><td>xauusd</td><td>55069032979</td><td>sell</td><td>79.3</td><td>4852.27336</td><td>4851.10</td><td></td><td>2026.02.05 17:08:57</td><td>4851.10</td><td>9 304.72</td><td>0.02 %</td></tr>
                <tr class="short"><td><svg width="11" height="15"><use href="#i-doc"/></svg>2026.02.05 17:08:57</td><td>xauusd</td><td>55069045876</td><td>sell</td><td>79.95</td><td>4850.91</td><td>4850.85</td><td></td><td>2026.02.05 17:10:09</td><td>4850.85</td><td>479.70</td><td>0.00 %</td></tr>
                <tr class="short"><td><svg width="11" height="15"><use href="#i-doc"/></svg>2026.02.05 17:16:07</td><td>xauusd</td><td>55069314726</td><td>sell</td><td>80.22</td><td>4837.95667</td><td>4837.54</td><td></td><td>2026.02.05 17:16:24</td><td>4837.54</td><td>3 342.50</td><td>0.01 %</td></tr>
                <tr class="short"><td><svg width="11" height="15"><use href="#i-doc"/></svg>2026.02.05 17:16:24</td><td>xauusd</td><td>55069328477</td><td>sell</td><td>80.34</td><td>4838.02333</td><td>4837.96</td><td></td><td>2026.02.05 17:16:40</td><td>4837.96</td><td>508.82</td><td>0.00 %</td></tr>
                <tr class="short"><td><svg width="11" height="15"><use href="#i-doc"/></svg>2026.02.05 17:16:40</td><td>xauusd</td><td>55069337872</td><td>sell</td><td>80.35</td><td>4839.20</td><td>4838.44</td><td></td><td>2026.02.05 17:17:06</td><td>4838.44</td><td>6 106.60</td><td>0.02 %</td></tr>
                <tr class="short"><td><svg width="11" height="15"><use href="#i-doc"/></svg></td><td></td><td></td><td></td><td></td><td></td><td></td><td></td><td></td><td></td><td></td><td></td></tr>
            </tbody>
        </table>
        <div class="scroll">
            <button aria-label="Scroll up"><svg width="10" height="10"><use href="#i-up"/></svg></button>
            <button aria-label="Scroll down"></button>
        </div>
    </section>
</body>
</html>
```
FILE: styles.css
```css
* {
    box-sizing: border-box;
}
body {
    display: flex;
    flex-direction: column;
    height: 100vh;
    margin: 0;
    overflow: hidden;
    background: #f4f4f4;
    color: #111;
    font: 11px/16px "DejaVu Sans Condensed", "DejaVu Sans", sans-serif;
}
button {
    display: flex;
    align-items: center;
    justify-content: center;
    flex: none;
    padding: 0;
    border: 0;
    background: none;
    color: inherit;
    font: inherit;
}
svg {
    flex: none;
}
a {
    color: inherit;
    text-decoration: none;
}
h1, h2, h3, ul {
    margin: 0;
    padding: 0;
    font-size: 11px;
    font-weight: normal;
}
table {
    border-collapse: collapse;
    table-layout: fixed;
}
.sprite {
    position: absolute;
    width: 0;
    height: 0;
}

/* desktop bar and title */
.desktop-bar {
    display: flex;
    justify-content: space-between;
    align-items: flex-start;
    height: 13px;
    background: #131313;
    overflow: hidden;
}
.pill {
    width: 26px;
    height: 1px;
    margin-left: 17px;
    background: #eee;
}
.clock {
    margin-top: -14px;
    margin-left: 76px;
    color: #f0f0f0;
    font: bold 14px/20px "Open Sans", sans-serif;
    white-space: pre;
}
.tray {
    margin-right: 11px;
}
.title-bar {
    display: grid;
    grid-template-columns: 1fr auto 1fr;
    align-items: center;
    height: 37px;
    border-bottom: 1px solid #000;
    background: #222;
    color: #929292;
}
.title-bar h1 {
    grid-column: 2;
    font: bold 14px/20px "Open Sans", sans-serif;
}
.title-buttons {
    display: flex;
    justify-content: flex-end;
    gap: 12px;
    padding-right: 2px;
}
.title-buttons button {
    width: 22px;
    height: 22px;
    border-radius: 50%;
    background: #373737;
    color: #fff;
}

/* menu and toolbar */
.menu-bar {
    display: flex;
    gap: 22px;
    height: 20px;
    padding: 4px 10px 0;
    border-bottom: 1px solid #aaa;
    background: #fff;
}
.toolbar {
    display: flex;
    height: 25px;
    border-bottom: 1px solid #777;
    background: #fff;
}
.tools {
    display: flex;
    align-items: center;
    flex: 1;
    min-width: 0;
    padding-top: 1px;
    overflow: hidden;
}
.sep {
    flex: none;
    width: 1px;
    height: 19px;
    margin: 0 3px 0 2px;
    background: #aaa;
}
.sep.first {
    margin-right: 1px;
}
.tool {
    width: 29px;
    height: 21px;
}
.tool.on {
    width: 26px;
    margin: 0 1px 0 2px;
    background: #808080;
}
.dollar {
    margin-left: 3px;
}
.ide, .tf {
    color: #1a6fb0;
    font: 12px/16px "Open Sans", sans-serif;
}
.ide {
    font-size: 13px;
}
.caret {
    width: 11px;
    height: 21px;
}
.caret::before {
    content: "";
    border: 4px solid transparent;
    border-top-color: #000;
    border-bottom: 0;
}
.algo {
    gap: 12px;
    height: 21px;
    margin: 0 7px 0 1px;
    padding: 0 11px 0 4px;
    background: #808080;
}
.new-order {
    gap: 10px;
    margin-right: 11px;
}
.status-tools {
    display: flex;
    align-items: center;
    flex: none;
    width: 123px;
    padding: 1px 0 0 5px;
    background: #f4f4f4;
}
.account {
    position: relative;
    margin-left: 12px;
    padding-right: 8px;
}
.badge {
    position: absolute;
    top: -2px;
    right: 0;
    width: 12px;
    height: 12px;
    border-radius: 50%;
    background: #e23a1e;
    color: #fff;
    font: 10px/12px "Open Sans", sans-serif;
}
.lvl {
    flex-direction: column;
    margin-left: 12px;
    color: #15a52c;
    font: bold 7px/7px "Open Sans", sans-serif;
}
.gauge {
    width: 37px;
    height: 10px;
    margin-left: 8px;
    border: 1px solid #888;
    background: #fff;
}
.gauge span {
    display: block;
    width: 6px;
    height: 8px;
    background: #3fdc3f;
}

/* docked panels */
main {
    display: flex;
    flex: none;
    border-bottom: 1px solid #aaa;
}
.dock {
    flex: none;
    width: 353px;
    margin-right: 4px;
}
.dock-title {
    display: flex;
    align-items: center;
    justify-content: space-between;
    height: 17px;
    padding: 1px 6px 0 4px;
    background: #808080;
    color: #c8c8c8;
}
.dock-title button {
    color: #fff;
}
.dock-body {
    display: flex;
    height: 47px;
    border-bottom: 1px solid #000;
    background: #fff;
    overflow: hidden;
}
.navigator .dock-title {
    height: 18px;
    padding-top: 2px;
}
.navigator .dock-body {
    height: 45px;
}
.scroll {
    display: flex;
    flex-direction: column;
    justify-content: space-between;
    flex: none;
    width: 17px;
    padding: 2px 0 0;
    background: #f4f4f4;
}
.scroll button {
    width: 17px;
    height: 17px;
    border: 1px solid #999;
    border-radius: 2px;
    background: #fff;
}
.watch table {
    flex: 1;
    height: 58px;
}
.w-sym {
    width: 133px;
}
.w-num {
    width: 67px;
}
.watch tr {
    height: 19px;
}
.watch th, .watch td {
    padding: 2px 4px 0;
    border-right: 1px solid #ccc;
    text-align: right;
    font-weight: normal;
}
.watch th {
    padding: 3px 7px 0;
}
.watch th:last-child, .watch td:last-child {
    border-right: 0;
}
.watch tr th:first-child, .watch tr td:first-child {
    padding-left: 6px;
    text-align: left;
    color: #111;
}
.watch td {
    border-bottom: 1px solid #ccc;
    color: #f00;
}
.watch td svg {
    margin-right: 6px;
}
.watch tbody tr:nth-child(2) {
    background: #eee;
}
.tree {
    flex: 1;
    margin-left: 9px;
    padding-top: 3px;
    border-left: 1px dotted #777;
    list-style: none;
}
.tree li {
    display: flex;
    align-items: center;
    gap: 2px;
    height: 18px;
    margin-left: 18px;
    border-left: 1px dotted #777;
}
.tree li::before {
    content: "";
    width: 9px;
    border-top: 1px dotted #777;
}
.tabs {
    display: flex;
    height: 26px;
    padding: 1px 4px 0;
    color: #808080;
}
.tabs a {
    height: 17px;
    padding: 0 11px 0 10px;
}
.tabs a + a {
    background: linear-gradient(#777, #777) 0 4px / 1px 12px no-repeat;
}

/* chart windows */
.workspace {
    flex: 1;
    min-width: 0;
    border-left: 1px solid #777;
    overflow: hidden;
}
.windows {
    display: grid;
    grid-template-columns: repeat(2, minmax(504px, 1fr));
}
.window {
    padding: 0 3px 4px;
    border-right: 2px solid #777;
    border-bottom: 2px solid #777;
    background: #f4f4f4;
}
.window.active {
    background: #e8f3fe;
}
.window header {
    display: flex;
    align-items: center;
    height: 29px;
    padding: 0 13px 0 7px;
    color: #aaa;
}
.window h3 {
    flex: 1;
    margin-left: 7px;
    color: #808080;
    font: 13px/20px "DejaVu Sans Condensed", sans-serif;
}
.window header button {
    padding-top: 2px;
}
.window header button + button {
    margin-left: 24px;
}
.window.active header, .window.active h3 {
    color: #111;
}
.window.cut {
    padding-bottom: 0;
    border-bottom: 1px solid #000;
}
.chart {
    position: relative;
    height: 91px;
    background: #000;
}
.chart svg {
    display: block;
    overflow: hidden;
}
.chart path {
    shape-rendering: crispEdges;
}
.chart .down {
    fill: #fff;
}
.chart .volume {
    stroke: #2fb52f;
    stroke-width: 2;
}
.chart .frame {
    fill: none;
    stroke: #fff;
}
.chart text, .graph text {
    font-size: 9px;
}
.labels {
    fill: #fff;
}
.one-click {
    position: absolute;
    top: 24px;
    left: 6px;
    display: flex;
    gap: 1px;
    height: 54px;
    background: #000;
}
.quote {
    display: block;
    width: 93px;
    height: 54px;
    color: #fff;
    text-align: left;
}
.sell {
    background: linear-gradient(#4a4aff, #0000a8);
    clip-path: polygon(0 0, 44px 0, 44px 20px, 100% 20px, 100% 100%, 0 100%);
}
.buy {
    background: linear-gradient(#ff4a4a, #a80000);
    clip-path: polygon(49px 0, 100% 0, 100% 100%, 0 100%, 0 20px, 49px 20px);
}
.side {
    display: block;
    width: 35px;
    height: 20px;
    margin-left: 4px;
    padding-top: 3px;
    border-bottom: 1px solid rgba(0, 0, 0, .5);
    font-size: 10px;
    text-align: center;
}
.buy .side {
    margin-left: 53px;
}
.rate {
    display: flex;
    align-items: baseline;
    justify-content: flex-end;
    gap: 4px;
    padding-right: 13px;
    font-size: 11px;
    font-weight: bold;
    line-height: 36px;
}
.rate b {
    font-size: 28px;
    font-weight: normal;
}
.lots {
    position: absolute;
    top: 0;
    left: 46px;
    display: flex;
    width: 95px;
    height: 18px;
    background: #fff;
    color: #555;
}
.lots button {
    width: 17px;
}
.lots input {
    flex: 1;
    min-width: 0;
    padding: 3px 4px 0;
    border: solid #ccc;
    border-width: 0 1px;
    background: #fff;
    color: #111;
    font: inherit;
    text-align: right;
}
.chart-tabs {
    height: 23px;
    padding: 0 4px 0 3px;
}
.chart-tabs a {
    height: 17px;
    padding: 2px 11px 0;
}
.chart-tabs a.current {
    padding: 1px 9px 0;
}
.tabs .current {
    border: 1px solid #000;
    border-top: 0;
    background: #fff;
    color: #000;
}
.tabs .current + a {
    background: none;
}
.arrows {
    margin: 6px 0 0 auto;
}

/* strategy tester */
.tester, .toolbox {
    display: flex;
}
.tester {
    flex: none;
    height: 94px;
}
.side-strip {
    flex: none;
    width: 16px;
    height: 90px;
    padding: 7px 0 0;
    background: #808080;
    color: #fff;
    overflow: hidden;
}
.side-strip button {
    width: 16px;
    height: 8px;
}
.side-strip h2 {
    height: 62px;
    margin-top: 8px;
    color: #b4b4b4;
    writing-mode: vertical-rl;
    transform: rotate(180deg);
    white-space: nowrap;
    overflow: hidden;
}
.tester-body {
    flex: 1;
    min-width: 0;
    margin-left: 1px;
}
.graph {
    height: 68px;
    border-bottom: 1px solid #000;
    background: #fff;
    overflow: hidden;
}
.tester-tabs {
    padding: 0 0 0 5px;
}
.tester-tabs a {
    height: 18px;
    padding: 1px 12px 0 10px;
}
.tester-tabs .current {
    padding-left: 9px;
}
.start {
    width: 71px;
    height: 16px;
    margin: 2px 0 0 auto;
    padding-top: 2px;
    background: #9ccb63;
    color: #111;
}

/* toolbox */
.toolbox {
    flex: 1;
    min-height: 0;
    border-top: 1px solid #aaa;
    overflow: hidden;
}
.toolbox .side-strip {
    height: auto;
    margin-right: 1px;
    background: #3296fa;
    color: #000;
}
.history {
    flex: 1;
    align-self: flex-start;
    background: #fff;
}
.history th, .history td {
    height: 20px;
    padding: 3px 3px 0;
    border-right: 1px solid #ccc;
    border-bottom: 1px solid #ccc;
    font-weight: normal;
    line-height: 14px;
    text-align: right;
    white-space: nowrap;
}
.history th {
    height: 17px;
    padding: 3px 7px 0;
    border-bottom: 0;
    border-color: #aaa;
}
.history th:nth-child(3) {
    padding-right: 9px;
}
.history th:nth-child(9) svg {
    margin-left: 8px;
}
.history tr :last-child {
    border-right: 0;
}
.history tr th:last-child {
    padding-right: 10px;
}
.history tr td:last-child {
    padding-right: 5px;
}
.history th:first-child, .history td:first-child {
    text-align: left;
}
.history td:first-child {
    padding-left: 5px;
}
.history td:first-child svg {
    margin: -4px 6px -4px 0;
    color: #1a6fb0;
    vertical-align: -2px;
}
.history td:nth-child(2) {
    padding-right: 6px;
}
.history td:nth-child(9) {
    padding-right: 1px;
}
.history tbody tr:nth-child(even) {
    background: #e9e9e9;
}
.history td:nth-child(7) {
    background: #ff9e9e;
    border-bottom-color: #ff9e9e;
}
.history td:nth-child(n+11) {
    color: #1414ff;
}
.history .short td:first-child svg {
    color: #d83a3a;
}
.history .loss td:nth-child(n+11) {
    color: #f00;
}
.w65 { width: 65px; }
.w76 { width: 76px; }
.w98 { width: 98px; }
.w109 { width: 109px; }
.w140 { width: 140px; }
.w141 { width: 141px; }
.w166 { width: 166px; }
.toolbox .scroll {
    width: 12px;
    padding: 1px 0 0;
    overflow: hidden;
}
```
